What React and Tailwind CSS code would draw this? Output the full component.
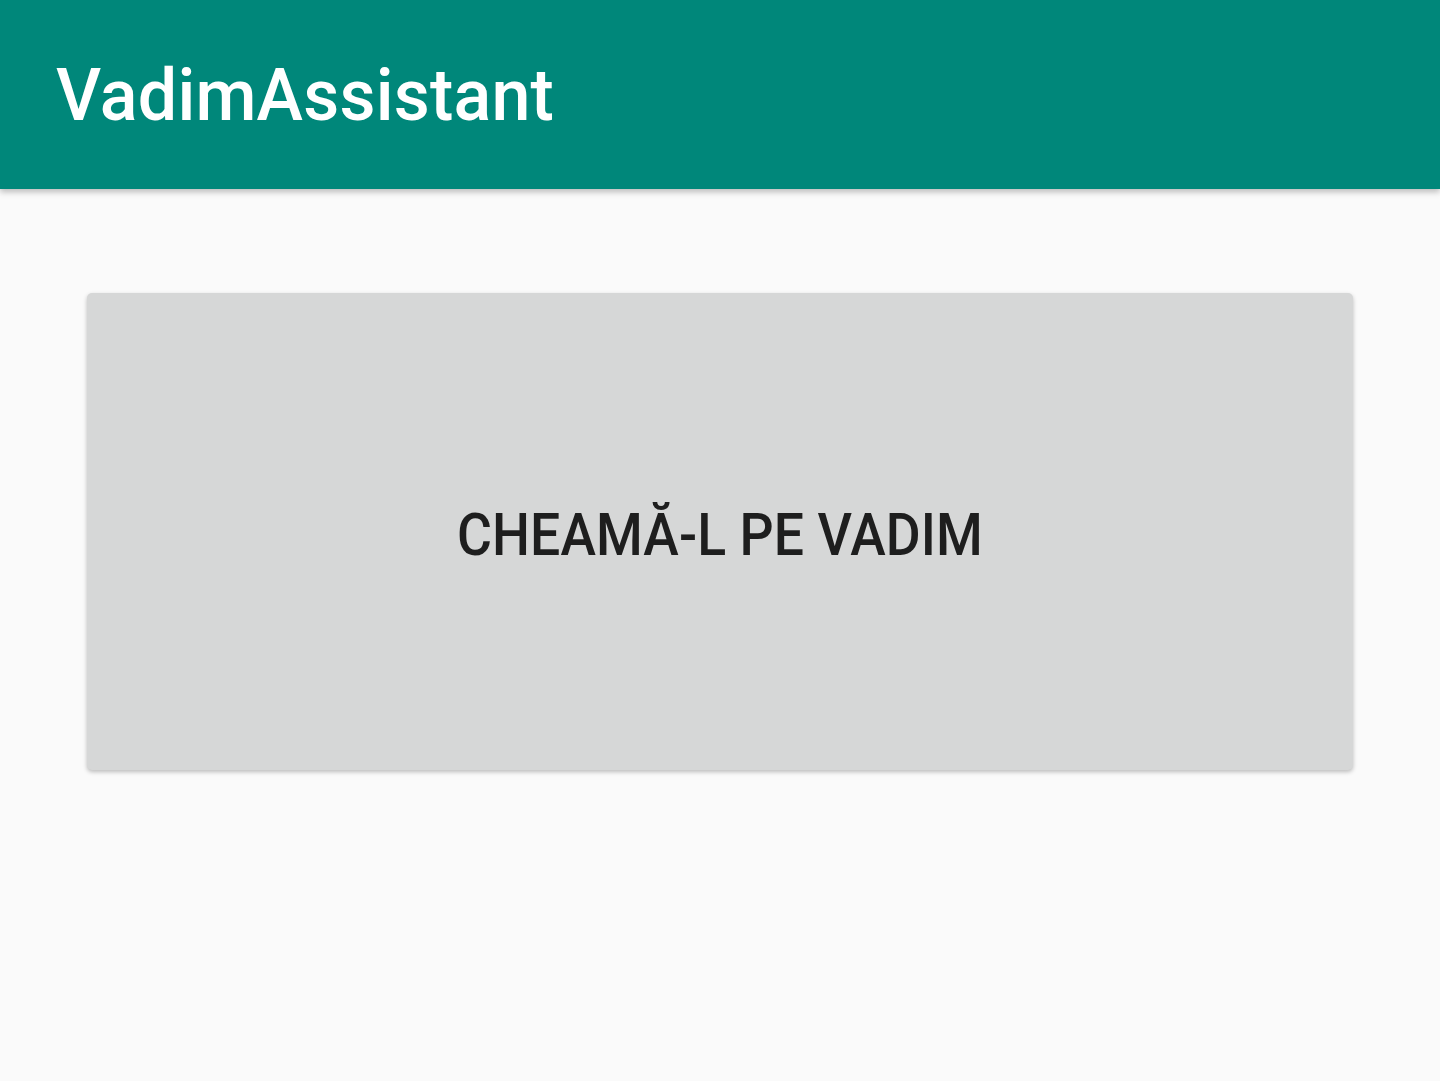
export default function App() {
  return (
    <div className="min-h-screen bg-[#fafafa] font-['Roboto',sans-serif]">
      {/* App bar */}
      <header className="relative z-10 h-[189px] bg-[#00877a] px-[56px] pt-[50px] shadow-[0_3px_6px_rgba(0,0,0,0.25)]">
        <h1 className="inline-block origin-top scale-y-[1.04] text-[70px] leading-[86px] font-medium tracking-[0.2px] text-white">
          VadimAssistant
        </h1>
      </header>

      {/* Content */}
      <main className="px-[87px] pt-[104px]">
        <button className="flex h-[477px] w-full items-center justify-center rounded-[5px] bg-[#d6d7d7] shadow-[0_2px_4px_rgba(0,0,0,0.25)]">
          <span className="inline-block scale-y-[1.09] pt-[8px] text-[53.5px] font-medium tracking-[0.1px] text-[#1e1e1e]">CHEAMĂ-L PE VADIM</span>
        </button>
      </main>
    </div>
  )
}
